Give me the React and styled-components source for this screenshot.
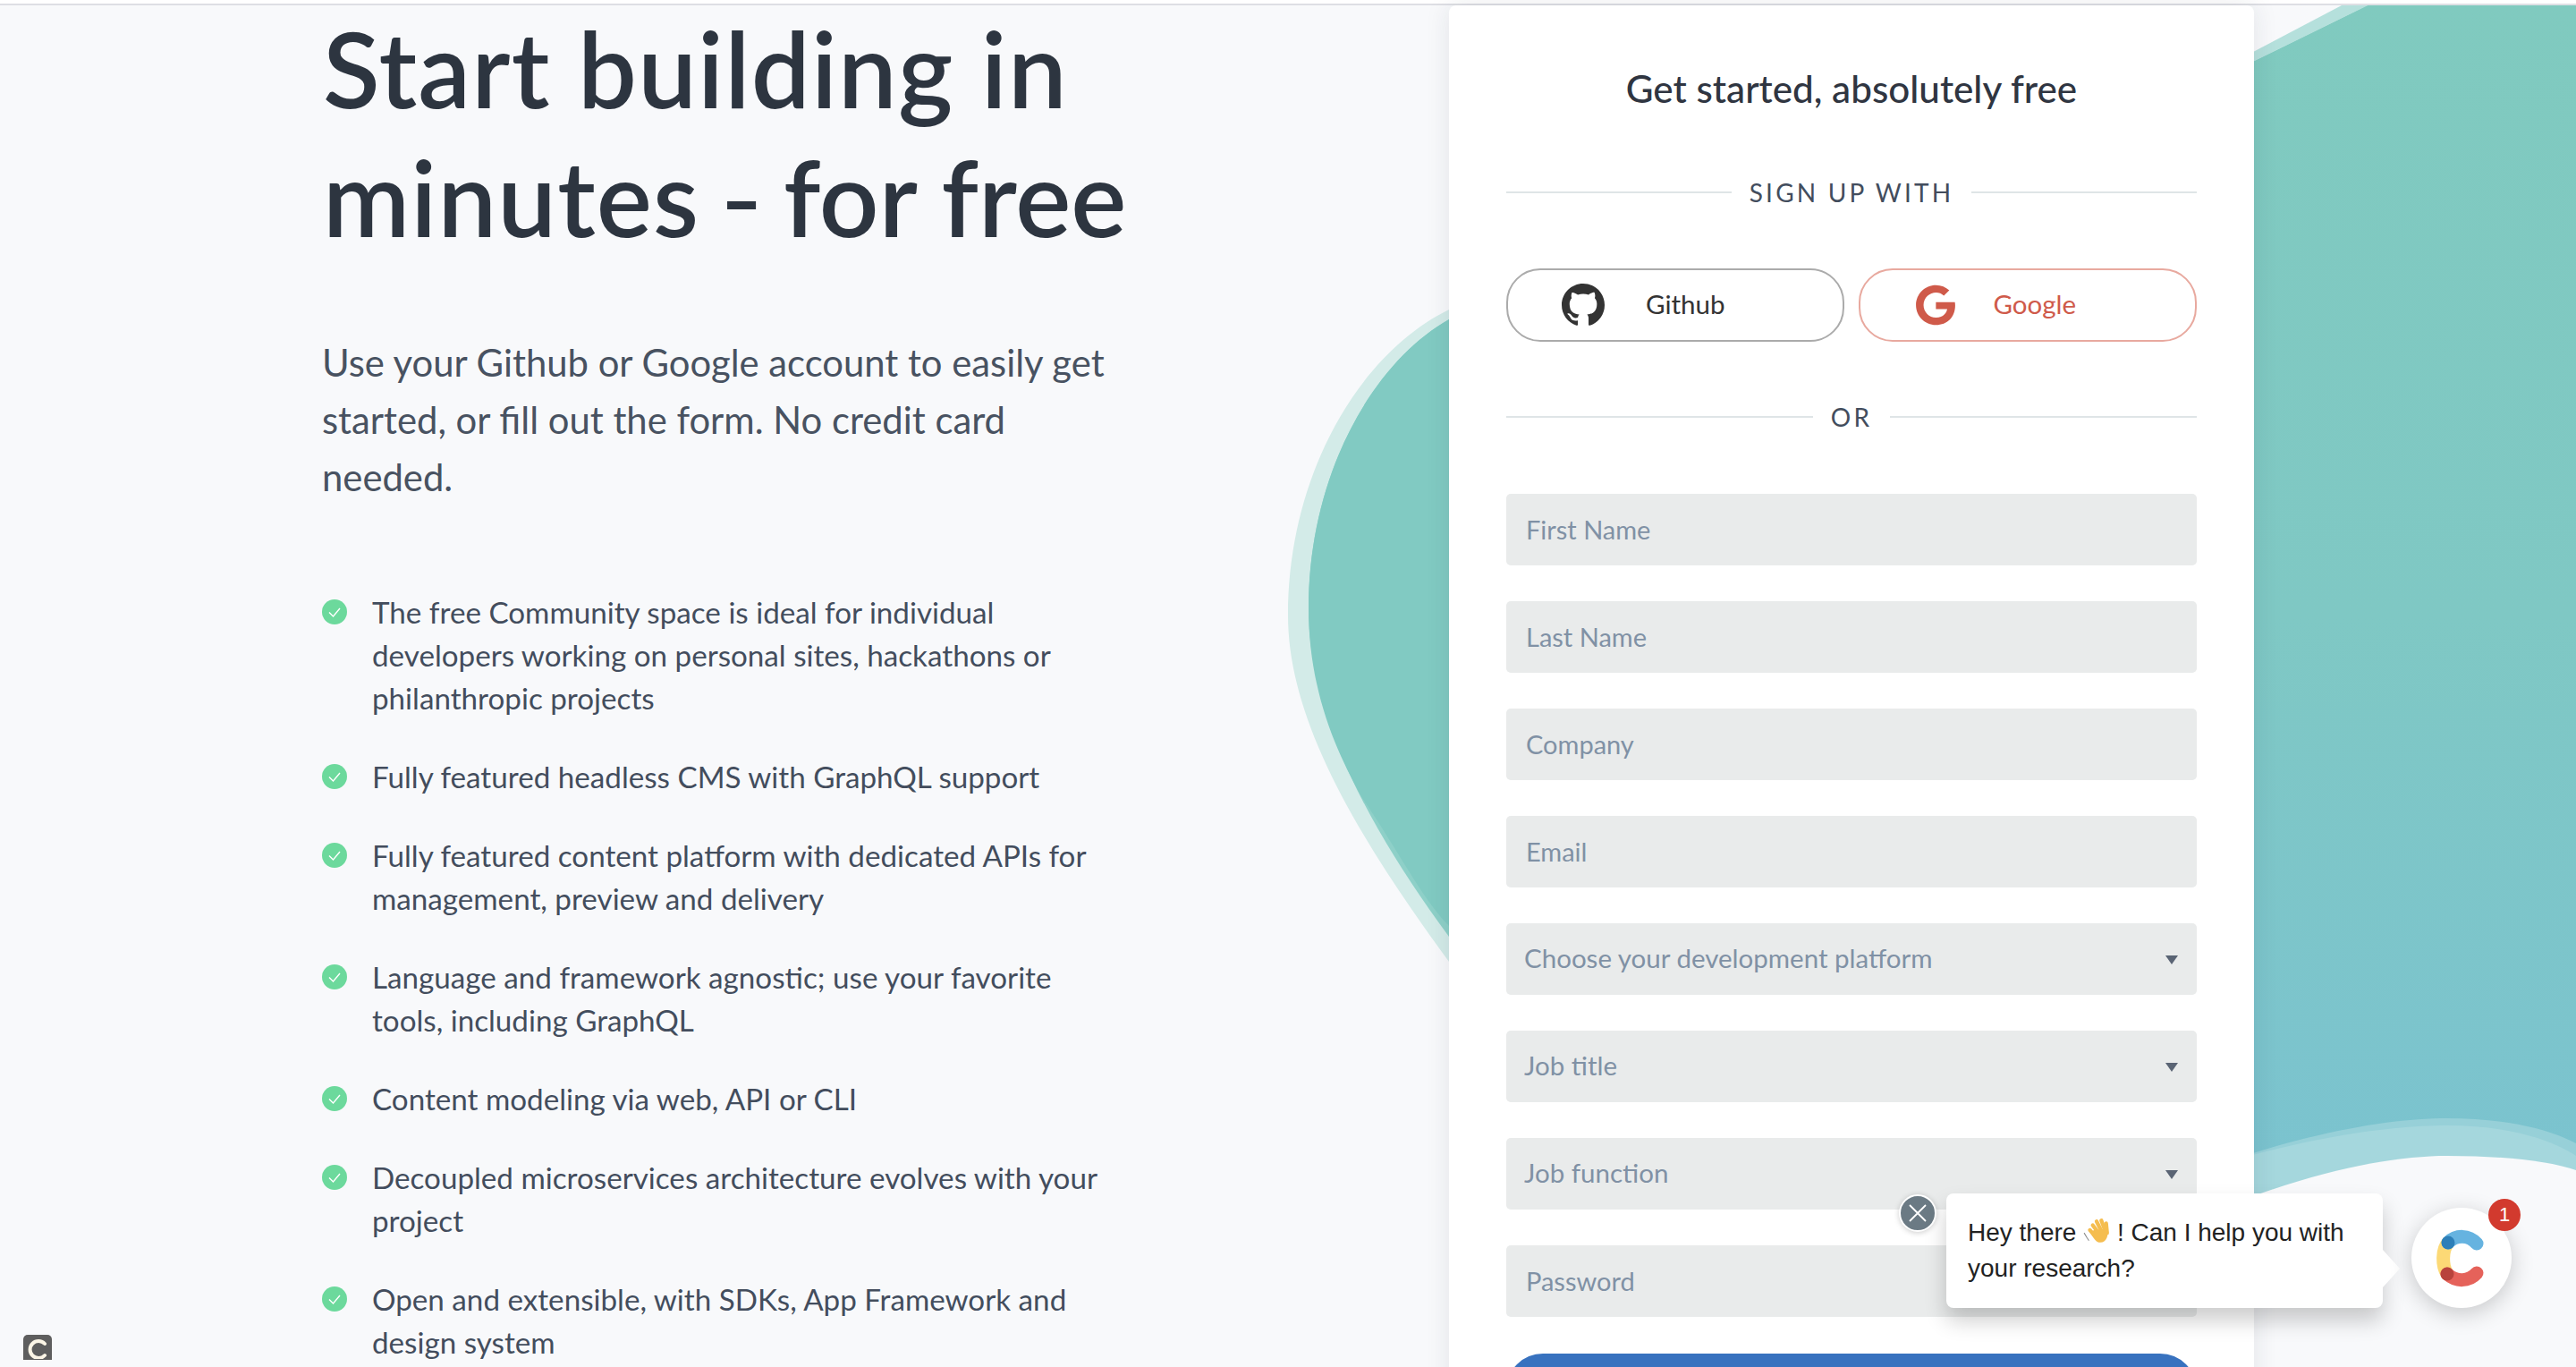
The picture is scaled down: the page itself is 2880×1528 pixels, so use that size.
import React from 'react';
import styled, { createGlobalStyle } from 'styled-components';
import { BsGithub } from 'react-icons/bs';
import { FaGoogle } from 'react-icons/fa';

const features = [
  ['The free Community space is ideal for individual', 'developers working on personal sites, hackathons or', 'philanthropic projects'],
  ['Fully featured headless CMS with GraphQL support'],
  ['Fully featured content platform with dedicated APIs for', 'management, preview and delivery'],
  ['Language and framework agnostic; use your favorite', 'tools, including GraphQL'],
  ['Content modeling via web, API or CLI'],
  ['Decoupled microservices architecture evolves with your', 'project'],
  ['Open and extensible, with SDKs, App Framework and', 'design system'],
];

function Backdrop() {
  return (
    <BackdropSvg viewBox="0 0 2880 1528">
      <defs>
        <linearGradient id="teal" gradientUnits="userSpaceOnUse" x1="0" y1="0" x2="0" y2="1528">
          <stop offset="0" stopColor="#80cabf" />
          <stop offset="0.45" stopColor="#7fc8c4" />
          <stop offset="0.85" stopColor="#7bc3cf" />
          <stop offset="1" stopColor="#7ac1d2" />
        </linearGradient>
      </defs>
      <path d="M1640 336L1620 346C1520 395 1440 530 1440 688C1440 800 1510 925 1620 1075L1640 1092Z" fill="#d3ebe8" />
      <path d="M1640 346L1620 357C1535 405 1463 530 1463 680C1463 800 1530 925 1620 1047L1640 1066Z" fill="#8ed0c8" />
      <path d="M1640 346L1620 357C1535 405 1463 530 1463 680C1463 780 1500 850 1523 892C1560 945 1590 1005 1620 1035L1640 1050Z" fill="#81cac2" />
      <path d="M2500 68L2618 6H2647L2500 78Z" fill="#b5e0dc" />
      <path d="M2500 78L2647 6H2880V1528H2500Z" fill="url(#teal)" />
      <path d="M2500 1295C2600 1262 2680 1250 2736 1250C2800 1250 2850 1262 2880 1278V1528H2500Z" fill="#97d0d8" />
      <path d="M2500 1296C2600 1268 2680 1258 2736 1258C2800 1258 2850 1272 2880 1292V1528H2500Z" fill="#a5d7dd" />
      <path d="M2500 1344C2600 1306 2680 1292 2736 1292C2800 1292 2850 1298 2880 1308V1528H2500Z" fill="#f8f9fb" />
    </BackdropSvg>
  );
}

function LogoC() {
  return (
    <svg width="64" height="70" viewBox="0 0 64 70" fill="none" strokeWidth="15" strokeLinecap="round">
      <path d="M17 18C10 26 10 44 16 53" stroke="#fcd976" />
      <path d="M17 18C26 9 40 9 49 19" stroke="#66b3e0" />
      <path d="M16 53C26 62 40 62 49 52" stroke="#e5625a" />
      <circle cx="17" cy="18" r="7.5" fill="#2d7fb8" />
      <circle cx="16" cy="53" r="7.5" fill="#b8433c" />
    </svg>
  );
}

function WaveHand() {
  return (
    <HandSvg viewBox="1 2 28 26">
      <g stroke="#f5bd4f" strokeWidth="4" strokeLinecap="round" fill="none">
        <path d="M11 9L17 17" />
        <path d="M15 5L20 15" />
        <path d="M20 4L24 15" />
        <path d="M25 7L26 17" />
        <path d="M8 14L13 20" />
      </g>
      <path d="M12 14L26 13C28 20 25 27 19 27C14 27 11 21 9 17Z" fill="#f5bd4f" />
      <path d="M2 17L5 22M5 22L7 25" stroke="#8a8a8a" strokeWidth="1" fill="none" />
    </HandSvg>
  );
}

export default function App() {
  return (
    <Page>
      <GlobalStyle />
      <Backdrop />
      <TopBar />
      <Content>
        <Intro>
          <Headline>
            Start building in<br />
            <TightWords>minutes <Dash>–</Dash> </TightWords><HeadlineTail>for free</HeadlineTail>
          </Headline>
          <Lead>
            Use your Github or Google account to easily get<br />
            started, or fill out the form. No credit card<br />
            needed.
          </Lead>
          <FeatureList>
            {features.map((lines) => (
              <Feature key={lines[0]}>
                <CheckIcon viewBox="0 0 28 28">
                  <circle cx="14" cy="14" r="14" fill="#6cd99c" />
                  <path d="M8 14.5L12.5 19L20 10" stroke="#fff" strokeWidth="1.4" fill="none" />
                </CheckIcon>
                <FeatureText>
                  {lines.map((line) => <span key={line}>{line}</span>)}
                </FeatureText>
              </Feature>
            ))}
          </FeatureList>
        </Intro>
        <Card>
          <CardTitle>Get started, absolutely free</CardTitle>
          <Divider $wide>SIGN UP WITH</Divider>
          <SocialRow>
            <SocialButton $color="#333333" $border="#ababab" $pad={60} $gap={46}>
              <BsGithub size={48} />
              <span>Github</span>
            </SocialButton>
            <SocialButton $color="#cf5a4a" $border="#e8a99f" $pad={61} $gap={42}>
              <FaGoogle size={46} />
              <span>Google</span>
            </SocialButton>
          </SocialRow>
          <Divider>OR</Divider>
          <Form>
            <TextInput placeholder="First Name" />
            <TextInput placeholder="Last Name" />
            <TextInput placeholder="Company" />
            <TextInput placeholder="Email" />
            {['Choose your development platform', 'Job title', 'Job function'].map((label) => (
              <SelectWrap key={label}>
                <Select defaultValue={label}><option>{label}</option></Select>
                <Caret />
              </SelectWrap>
            ))}
            <TextInput placeholder="Password" />
          </Form>
          <SubmitButton aria-label="Submit" />
        </Card>
      </Content>
      <CornerBadge>
        <svg width="24" height="26" viewBox="0 0 24 26" fill="none">
          <path d="M20 9A9.5 9.5 0 1 0 20 22" stroke="#fbf5e6" strokeWidth="4" strokeLinecap="round" />
        </svg>
      </CornerBadge>
      <CloseChat>
        <svg width="22" height="22" viewBox="0 0 22 22">
          <path d="M2 2L20 20M20 2L2 20" stroke="#fff" strokeWidth="1.8" />
        </svg>
      </CloseChat>
      <ChatBubble>
        Hey there <WaveHand /> ! Can I help you with<br />your research?
      </ChatBubble>
      <Launcher>
        <LogoC />
        <Badge>1</Badge>
      </Launcher>
    </Page>
  );
}

const GlobalStyle = createGlobalStyle`
  html, body {
    margin: 0;
    background: #f8f9fb;
  }
  * {
    box-sizing: border-box;
  }
`;

const Page = styled.div`
  position: relative;
  width: 2880px;
  height: 1528px;
  overflow: hidden;
  background: #f8f9fb;
  font-family: Lato, "Open Sans", sans-serif;
`;

const BackdropSvg = styled.svg`
  position: absolute;
  top: 0;
  left: 0;
  width: 2880px;
  height: 1528px;
`;

const TopBar = styled.div`
  position: relative;
  height: 6px;
  background: #fff;
  border-bottom: 2px solid #dedfe4;
`;

const Content = styled.div`
  position: relative;
  display: flex;
  padding-left: 360px;
`;

const Intro = styled.div`
  flex: none;
  width: 1260px;
`;

const Headline = styled.h1`
  margin: -2px 0 0 1px;
  font-size: 117px;
  font-weight: 600;
  letter-spacing: 1.2px;
  line-height: 144px;
  color: #2d3540;
`;

const TightWords = styled.span`
  word-spacing: -18px;
`;

const HeadlineTail = styled.span`
  letter-spacing: 0;
`;

const Dash = styled.span`
  display: inline-block;
  transform: scaleX(0.68);
`;

const Lead = styled.p`
  margin: 81px 0 0;
  font-size: 41.8px;
  line-height: 64px;
  color: #485261;
`;

const FeatureList = styled.ul`
  display: flex;
  flex-direction: column;
  gap: 40px;
  margin: 95px 0 0;
  padding: 0;
  list-style: none;
`;

const Feature = styled.li`
  display: flex;
  gap: 28px;
`;

const CheckIcon = styled.svg`
  flex: none;
  width: 28px;
  height: 28px;
  margin-top: 10px;
`;

const FeatureText = styled.div`
  display: flex;
  flex-direction: column;
  font-size: 33.2px;
  line-height: 48px;
  color: #434d5d;
  white-space: nowrap;
`;

const Card = styled.section`
  flex: none;
  width: 900px;
  height: 1700px;
  padding: 65px 64px 0;
  background: #fff;
  border-radius: 8px;
  box-shadow: 0 0 28px rgba(30, 40, 60, 0.1);
`;

const CardTitle = styled.h2`
  margin: 0;
  text-align: center;
  font-size: 42.2px;
  font-weight: 500;
  line-height: 56px;
  color: #2f3541;
`;

const Divider = styled.div`
  display: flex;
  align-items: center;
  gap: 20px;
  height: 40px;
  margin-top: ${(p) => (p.$wide ? '68px' : '64px')};
  font-size: 28px;
  letter-spacing: 3.2px;
  color: #434d5d;

  &::before,
  &::after {
    content: "";
    flex: 1;
    height: 2px;
    background: #dfe5e7;
  }
`;

const SocialRow = styled.div`
  display: flex;
  gap: 16px;
  margin-top: 65px;
`;

const SocialButton = styled.button`
  flex: 1;
  display: flex;
  align-items: center;
  gap: ${(p) => p.$gap}px;
  height: 82px;
  padding: 0 0 0 ${(p) => p.$pad}px;
  background: #fff;
  border: 2px solid ${(p) => p.$border};
  border-radius: 38px;
  font-family: inherit;
  font-size: 29.5px;
  color: ${(p) => p.$color};

  span {
    margin-bottom: 4px;
  }
`;

const Form = styled.form`
  display: flex;
  flex-direction: column;
  gap: 40px;
  margin-top: 66px;
`;

const TextInput = styled.input`
  display: block;
  width: 100%;
  height: 80px;
  padding: 0 22px 2px;
  background: #e9ebeb;
  border: none;
  border-radius: 5px;
  font-family: inherit;
  font-size: 29px;

  &::placeholder {
    color: #8091a5;
    opacity: 1;
  }
`;

const SelectWrap = styled.div`
  position: relative;
  height: 80px;
`;

const Select = styled.select`
  display: block;
  width: 100%;
  height: 80px;
  padding: 0 20px 4px;
  background: #e9ebeb;
  border: none;
  border-radius: 5px;
  appearance: none;
  font-family: inherit;
  font-size: 29.5px;
  color: #8091a5;
`;

const Caret = styled.span`
  position: absolute;
  top: 36px;
  right: 21px;
  border-top: 10px solid #5a6474;
  border-left: 7px solid transparent;
  border-right: 7px solid transparent;
`;

const SubmitButton = styled.button`
  display: block;
  width: 100%;
  height: 82px;
  margin-top: 41px;
  background: #3872bf;
  border: none;
  border-radius: 41px;
`;

const CornerBadge = styled.div`
  position: absolute;
  left: 26px;
  top: 1492px;
  display: flex;
  align-items: center;
  justify-content: center;
  width: 32px;
  height: 28px;
  background: #5e5e5e;
  border-radius: 5px 5px 0 0;
`;

const ChatBubble = styled.div`
  position: absolute;
  left: 2176px;
  top: 1334px;
  width: 488px;
  height: 128px;
  padding: 24px;
  background: #fff;
  border-radius: 8px;
  box-shadow: 0 14px 24px rgba(0, 0, 0, 0.2);
  font-family: "Liberation Sans", Arial, sans-serif;
  font-size: 28px;
  line-height: 40px;
  color: #222;
  white-space: nowrap;

  &::after {
    content: "";
    position: absolute;
    top: 63px;
    left: 100%;
    border-left: 19px solid #fff;
    border-top: 21px solid transparent;
    border-bottom: 21px solid transparent;
  }
`;

const HandSvg = styled.svg`
  display: inline-block;
  width: 30px;
  height: 28px;
  vertical-align: -3px;
`;

const CloseChat = styled.div`
  position: absolute;
  left: 2123px;
  top: 1335px;
  display: flex;
  align-items: center;
  justify-content: center;
  width: 42px;
  height: 42px;
  background: #6b7a84;
  border: 2px solid #fff;
  border-radius: 50%;
  box-shadow: 0 1px 6px rgba(0, 0, 0, 0.2);
`;

const Launcher = styled.div`
  position: absolute;
  left: 2696px;
  top: 1350px;
  display: flex;
  align-items: center;
  justify-content: center;
  width: 112px;
  height: 112px;
  background: #fff;
  border-radius: 50%;
  box-shadow: 0 6px 26px rgba(0, 0, 0, 0.2);
`;

const Badge = styled.div`
  position: absolute;
  top: -10px;
  right: -10px;
  display: flex;
  align-items: center;
  justify-content: center;
  width: 36px;
  height: 36px;
  background: #d23a2e;
  border-radius: 50%;
  font-family: "Liberation Sans", Arial, sans-serif;
  font-size: 22px;
  color: #fff;
`;
